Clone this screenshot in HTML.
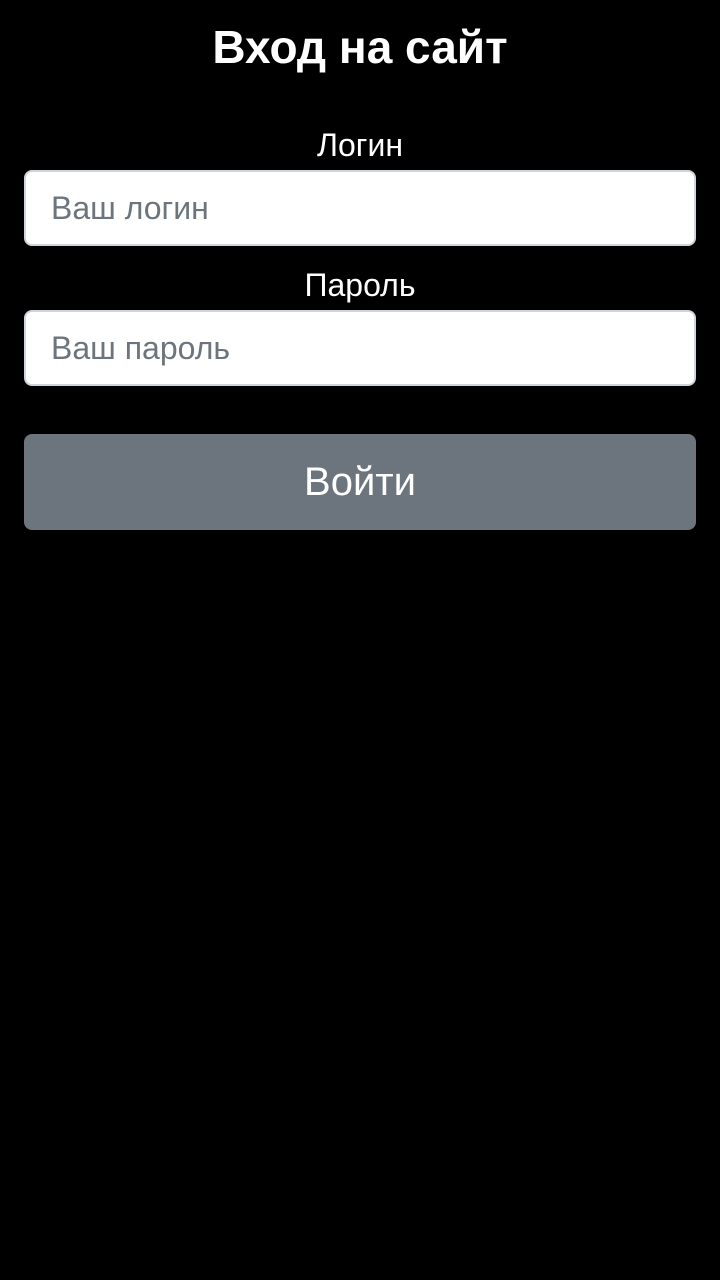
<!DOCTYPE html>
<html><head><meta charset="utf-8"><style>
html,body{margin:0;padding:0;background:#000;width:720px;height:1280px;overflow:hidden;font-family:"Liberation Sans",sans-serif;}
h1{position:absolute;top:18px;left:0;width:720px;text-align:center;margin:0;color:#fff;font-size:46px;font-weight:bold;line-height:58px;}
.lbl{position:absolute;left:0;width:720px;text-align:center;color:#fff;font-size:32px;line-height:36px;}
.inp{position:absolute;left:24px;width:672px;height:76px;background:#fff;border:2px solid #ced4da;border-radius:8px;box-sizing:border-box;color:#6c757d;font-size:32px;line-height:72px;padding-left:25px;}
.btn{position:absolute;left:24px;top:434px;width:672px;height:96px;background:#6c757d;border-radius:8px;color:#fff;text-align:center;font-size:40px;line-height:96px;}
</style></head><body>
<h1>Вход на сайт</h1>
<div class="lbl" style="top:127px">Логин</div>
<div class="inp" style="top:170px">Ваш логин</div>
<div class="lbl" style="top:267px">Пароль</div>
<div class="inp" style="top:310px">Ваш пароль</div>
<div class="btn">Войти</div>
</body></html>
